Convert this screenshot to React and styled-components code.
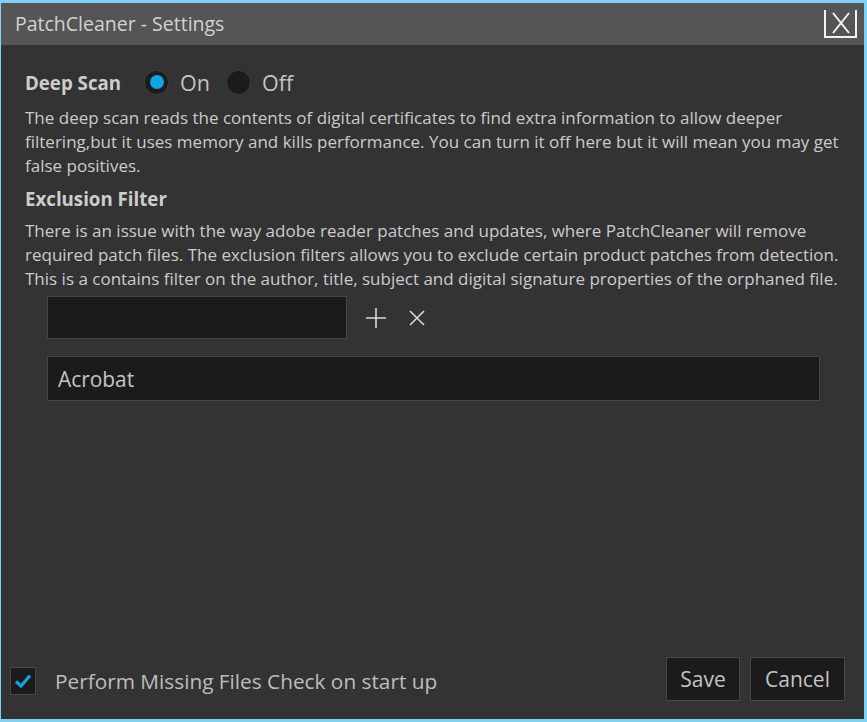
import React from "react";
import styled, { createGlobalStyle } from "styled-components";

const Global = createGlobalStyle`
  html, body { margin: 0; padding: 0; background: #333333; }
  * { box-sizing: border-box; }
`;

const FONT = `"Open Sans", "Noto Sans", sans-serif`;
const ACCENT = "#0ea5e4";

const Window = styled.div`
  width: 867px;
  height: 722px;
  display: flex;
  flex-direction: column;
  background: #333333;
  border-style: solid;
  border-color: #7ed3f2;
  border-width: 3px 3px 3px 1px;
  font-family: ${FONT};
  color: #cbcbcb;
`;

const TitleBar = styled.div`
  height: 42px;
  background: #555555;
  display: flex;
  align-items: center;
  justify-content: space-between;
  padding: 0 7px 0 14px;
  flex-shrink: 0;
`;

const Title = styled.span`
  font-size: 19.5px;
  color: #d2d2d2;
  margin-top: -2px;
`;

const CloseButton = styled.button`
  width: 33px;
  height: 28px;
  margin-top: 7px;
  align-self: flex-start;
  background: transparent;
  border: 2px solid #f2f2f2;
  border-top: none;
  padding: 0;
  display: flex;
  align-items: center;
  justify-content: center;
  cursor: pointer;
`;

const Content = styled.div`
  flex: 1;
  padding: 20px 10px 0 24px;
  display: flex;
  flex-direction: column;
`;

const HeadingRow = styled.div`
  display: flex;
  align-items: center;
  height: 34px;
  margin-top: ${(p) => p.$mt || 0}px;
`;

const Heading = styled.div`
  font-size: 18.7px;
  font-weight: 700;
  color: #cdcdcd;
  margin-right: ${(p) => p.$gap || 0}px;
`;

const RadioLabel = styled.label`
  display: flex;
  align-items: center;
  font-size: 21.5px;
  color: #c4c4c4;
  margin-right: 16px;
`;

const RadioCircle = styled.span`
  width: 25px;
  height: 25px;
  border-radius: 50%;
  background: #1b1b1b;
  border: 1px solid #3e3e3e;
  display: flex;
  align-items: center;
  justify-content: center;
  margin-right: 11px;
  &::after {
    content: "";
    display: ${(p) => (p.$checked ? "block" : "none")};
    width: 14px;
    height: 14px;
    border-radius: 50%;
    background: ${ACCENT};
  }
`;

const Paragraph = styled.p`
  margin: ${(p) => p.$mt || 0}px 0 0 0;
  font-size: 17px;
  line-height: 24px;
  color: #cbcbcb;
  white-space: nowrap;
`;

const FilterRow = styled.div`
  display: flex;
  align-items: center;
  margin: 5px 0 0 22px;
`;

const TextInput = styled.input`
  width: 300px;
  height: 43px;
  background: #1b1b1b;
  border: 1px solid #454545;
  color: #cbcbcb;
  font-family: ${FONT};
  font-size: 21px;
  padding: 0 10px;
  outline: none;
`;

const IconButton = styled.button`
  width: 30px;
  height: 30px;
  background: transparent;
  border: none;
  padding: 0;
  margin-left: ${(p) => p.$ml}px;
  display: flex;
  align-items: center;
  justify-content: center;
`;

const ListBox = styled.div`
  margin: 17px 0 0 22px;
  width: 773px;
  height: 45px;
  background: #1b1b1b;
  border: 1px solid #454545;
  display: flex;
  align-items: center;
  padding: 0 10px;
  font-size: 20.9px;
  color: #c4c4c4;
`;

const Footer = styled.div`
  display: flex;
  align-items: center;
  justify-content: space-between;
  padding: 0 19px 17px 9px;
  height: 63px;
`;

const CheckRow = styled.label`
  display: flex;
  align-items: center;
  margin-top: 4px;
  font-size: 20.8px;
  color: #bdbdbd;
`;

const CheckBox = styled.span`
  width: 26px;
  height: 28px;
  background: #1b1b1b;
  border: 1px solid #474747;
  display: flex;
  align-items: center;
  justify-content: center;
  margin-right: 19px;
`;

const Buttons = styled.div`
  display: flex;
  gap: 10px;
`;

const Button = styled.button`
  height: 44px;
  min-width: ${(p) => p.$w}px;
  background: #1b1b1b;
  border: 1px solid #474747;
  color: #c4c4c4;
  font-family: ${FONT};
  font-size: 21px;
  padding: 0 12px;
`;

export default function App() {
  return (
    <>
      <Global />
      <Window>
        <TitleBar>
          <Title>PatchCleaner - Settings</Title>
          <CloseButton aria-label="Close">
            <svg width="18" height="22" viewBox="0 0 18 22">
              <path d="M1 1 L17 21 M17 1 L1 21" stroke="#f4f4f4" strokeWidth="2" fill="none" />
            </svg>
          </CloseButton>
        </TitleBar>
        <Content>
          <HeadingRow>
            <Heading $gap={23}>Deep Scan</Heading>
            <RadioLabel>
              <RadioCircle $checked />
              On
            </RadioLabel>
            <RadioLabel>
              <RadioCircle />
              Off
            </RadioLabel>
          </HeadingRow>
          <Paragraph $mt={7}>
            The deep scan reads the contents of digital certificates to find extra information to allow deeper
            <br />
            filtering,but it uses memory and kills performance. You can turn it off here but it will mean you may get
            <br />
            false positives.
          </Paragraph>
          <HeadingRow $mt={3}>
            <Heading>Exclusion Filter</Heading>
          </HeadingRow>
          <Paragraph $mt={4}>
            There is an issue with the way adobe reader patches and updates, where PatchCleaner will remove
            <br />
            required patch files. The exclusion filters allows you to exclude certain product patches from detection.
            <br />
            This is a contains filter on the author, title, subject and digital signature properties of the orphaned file.
          </Paragraph>
          <FilterRow>
            <TextInput type="text" />
            <IconButton $ml={14} aria-label="Add">
              <svg width="22" height="22" viewBox="0 0 22 22">
                <path d="M11 1 V21 M1 11 H21" stroke="#d8d8d8" strokeWidth="1.6" fill="none" />
              </svg>
            </IconButton>
            <IconButton $ml={11} aria-label="Remove">
              <svg width="16" height="16" viewBox="0 0 16 16">
                <path d="M1 1 L15 15 M15 1 L1 15" stroke="#d8d8d8" strokeWidth="1.6" fill="none" />
              </svg>
            </IconButton>
          </FilterRow>
          <ListBox>Acrobat</ListBox>
        </Content>
        <Footer>
          <CheckRow>
            <CheckBox>
              <svg width="18" height="16" viewBox="0 0 18 16">
                <path d="M2 8.5 L7 13 L16 2.5" stroke={ACCENT} strokeWidth="3.2" fill="none" />
              </svg>
            </CheckBox>
            Perform Missing Files Check on start up
          </CheckRow>
          <Buttons>
            <Button $w={74}>Save</Button>
            <Button $w={95}>Cancel</Button>
          </Buttons>
        </Footer>
      </Window>
    </>
  );
}
